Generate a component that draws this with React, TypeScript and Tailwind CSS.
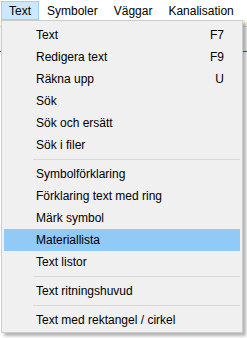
import React from 'react';

type Item = { label: string; shortcut?: string; active?: boolean } | 'sep';

const items: Item[] = [
  { label: 'Text', shortcut: 'F7' },
  { label: 'Redigera text', shortcut: 'F9' },
  { label: 'Räkna upp', shortcut: 'U' },
  { label: 'Sök' },
  { label: 'Sök och ersätt' },
  { label: 'Sök i filer' },
  'sep',
  { label: 'Symbolförklaring' },
  { label: 'Förklaring text med ring' },
  { label: 'Märk symbol' },
  { label: 'Materiallista', active: true },
  { label: 'Text listor' },
  'sep',
  { label: 'Text ritningshuvud' },
  'sep',
  { label: 'Text med rektangel / cirkel' },
];

const menus = ['Text', 'Symboler', 'Väggar', 'Kanalisation', 'Hjälp'];

export default function App() {
  return (
    <div className="relative w-[247px] h-[338px] overflow-hidden bg-white text-[12px] text-black font-['Segoe_UI','Liberation_Sans',sans-serif]">
      {/* menu bar */}
      <div className="flex h-[20px] items-stretch bg-white pl-[1px] whitespace-nowrap">
        {menus.map((m, i) => (
          <div
            key={m}
            className={`flex items-center px-[7px] mt-[1px] border ${
              i === 0 ? 'bg-[#cce8ff] border-[#99d1ff]' : 'border-transparent'
            }`}
          >
            {m}
          </div>
        ))}
      </div>

      {/* content behind the menu */}
      <div className="h-[7px] bg-[#fdf5e2] border-b border-[#d8d8d8]" />
      <div className="h-[24px] bg-[#f4f4f4]" />
      <div className="h-px bg-[#e02020]" />

      {/* dropdown */}
      <div className="absolute left-[1px] top-[20px] w-[242px] border border-[#cccccc] bg-[#f0f0f0] pt-[3px] px-[2px] pb-[1px] shadow-[3px_3px_3px_rgba(0,0,0,0.3)]">
        {items.map((it, i) =>
          it === 'sep' ? (
            <div key={i} className="flex h-[7px] items-center pl-[29px]">
              <div className="h-px w-full bg-[#d7d7d7]" />
            </div>
          ) : (
            <div
              key={i}
              className={`flex h-[22px] items-center justify-between pl-[32px] pr-[16px] ${
                it.active ? 'bg-[#91c9f7]' : ''
              }`}
            >
              <span>{it.label}</span>
              {it.shortcut && <span>{it.shortcut}</span>}
            </div>
          )
        )}
      </div>
    </div>
  );
}
